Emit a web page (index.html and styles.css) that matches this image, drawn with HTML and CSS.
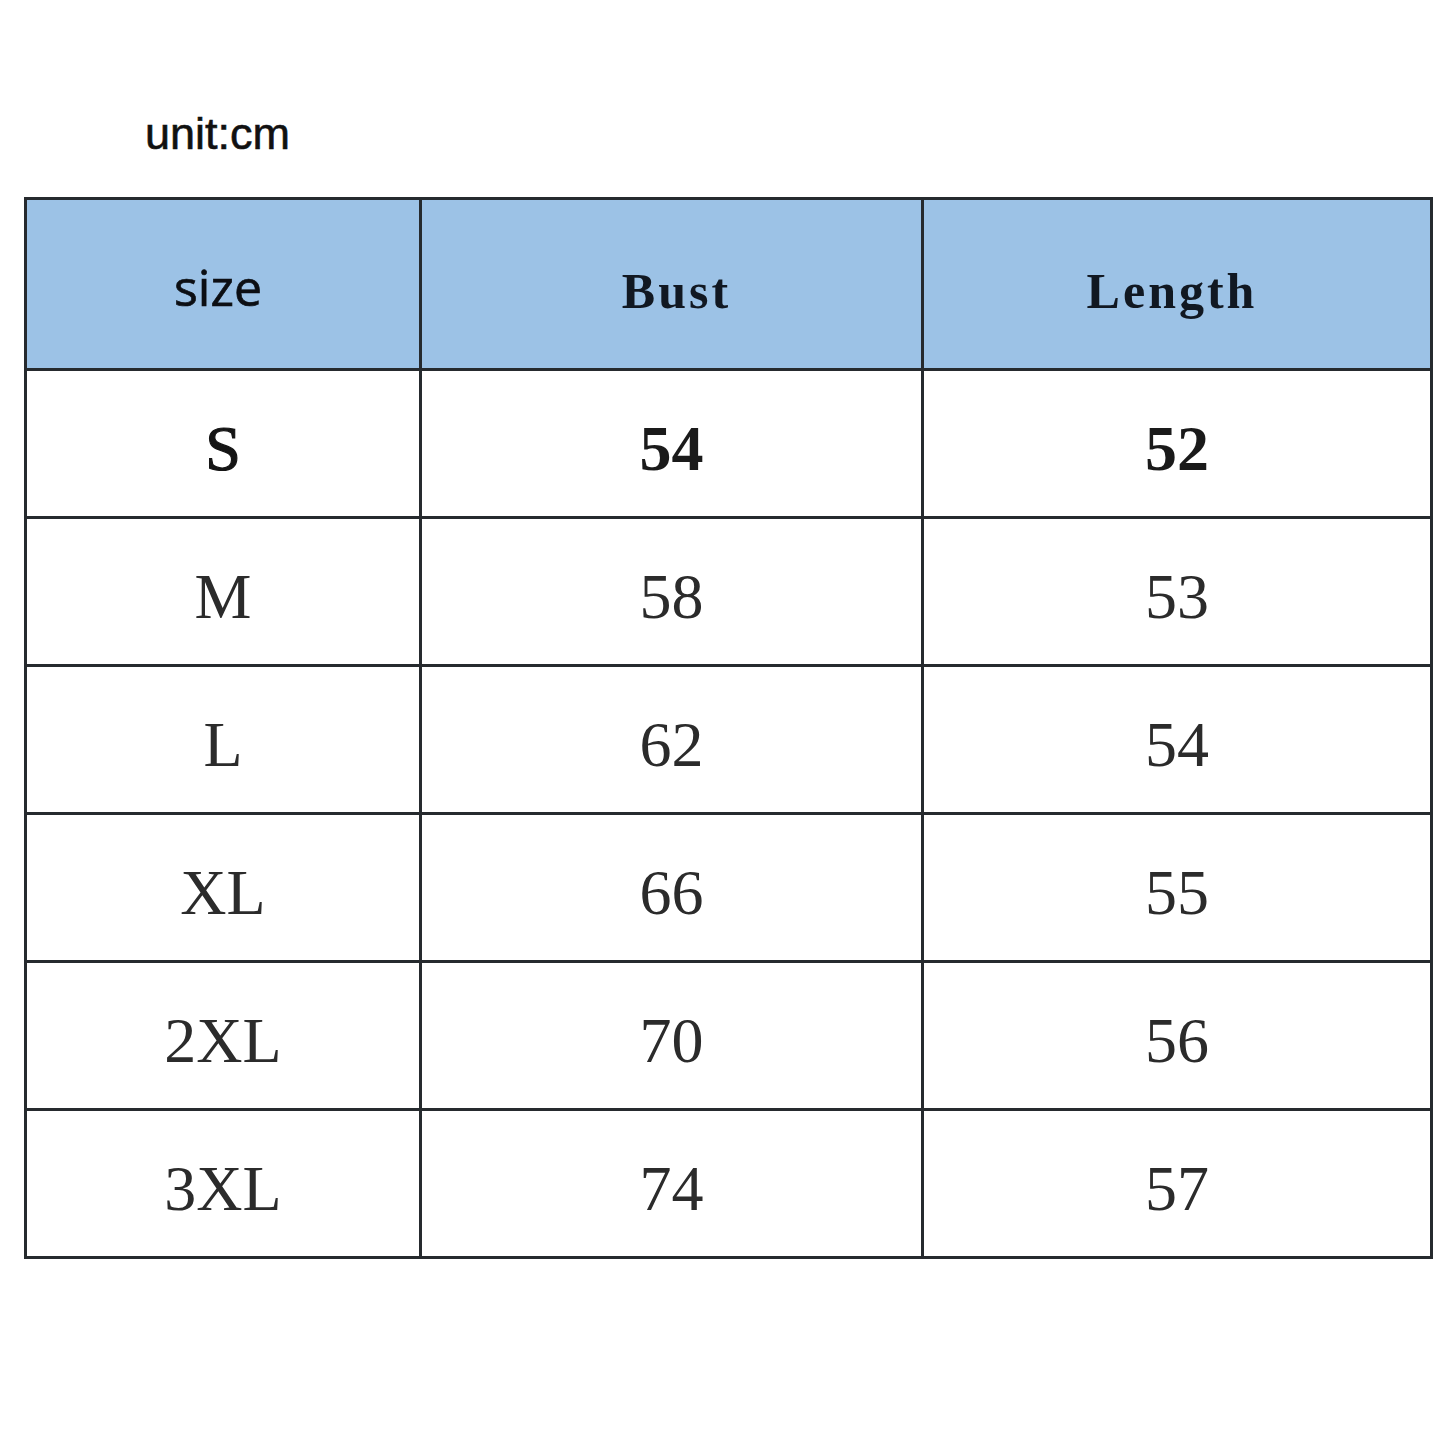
FILE: index.html
```html
<!DOCTYPE html>
<html>
<head>
<meta charset="utf-8">
<link rel="stylesheet" href="styles.css">
</head>
<body>
<div class="page">
  <div class="unit">unit:cm</div>
  <table class="chart">
    <colgroup>
      <col class="c1"><col class="c2"><col class="c3">
    </colgroup>
    <thead>
      <tr>
        <th class="h-size"><span class="lbl lbl-size">size</span></th>
        <th class="h-serif"><span class="lbl lbl-bust">Bust</span></th>
        <th class="h-serif"><span class="lbl lbl-length">Length</span></th>
      </tr>
    </thead>
    <tbody>
      <tr class="first"><td class="semi">S</td><td>54</td><td>52</td></tr>
      <tr><td>M</td><td>58</td><td>53</td></tr>
      <tr><td>L</td><td>62</td><td>54</td></tr>
      <tr><td>XL</td><td>66</td><td>55</td></tr>
      <tr><td>2XL</td><td>70</td><td>56</td></tr>
      <tr><td>3XL</td><td>74</td><td>57</td></tr>
    </tbody>
  </table>
</div>
</body>
</html>
```
FILE: styles.css
```css
html, body {
  margin: 0;
  padding: 0;
  background: #ffffff;
}
.page {
  padding: 104px 0 0 24px;
}
.unit {
  font-family: "Liberation Sans", Arial, sans-serif;
  font-size: 45px;
  line-height: 60px;
  color: #111;
  padding-left: 121px;
  height: 60px;
  margin-bottom: 33px;
  -webkit-text-stroke: 0.6px #111;
}
.chart {
  border-collapse: collapse;
  table-layout: fixed;
  width: 1406px;
}
.c1 { width: 395px; }
.c2 { width: 502px; }
.c3 { width: 509px; }
.chart th, .chart td {
  border: 3px solid #262a2e;
  padding: 0;
  text-align: center;
  vertical-align: middle;
}
.chart th {
  background: #9cc2e6;
  height: 168px;
  color: #111822;
}
.chart th.h-size {
  font-family: "Open Sans", sans-serif;
  font-weight: 400;
  font-size: 50px;
  color: #0c0f14;
  -webkit-text-stroke: 0.7px #0c0f14;
}
.chart th.h-serif {
  font-family: "Liberation Serif", serif;
  font-weight: 700;
  font-size: 50px;
  letter-spacing: 3px;
}
.lbl { display: inline-block; }
.lbl-size { margin: 6px 10px 0 0; }
.lbl-bust { margin: 14px 0 0 10px; }
.lbl-length { margin: 14px 10px 0 0; }
.chart td {
  height: 134px;
  font-family: "Liberation Serif", serif;
  font-size: 64px;
  color: #2b2b2b;
  padding-top: 11px;
}
.chart tr.first td {
  font-weight: 700;
  color: #1a1a1a;
}
.chart tr.first td.semi {
  font-weight: 400;
  color: #151515;
  -webkit-text-stroke: 1.2px #151515;
}
```
